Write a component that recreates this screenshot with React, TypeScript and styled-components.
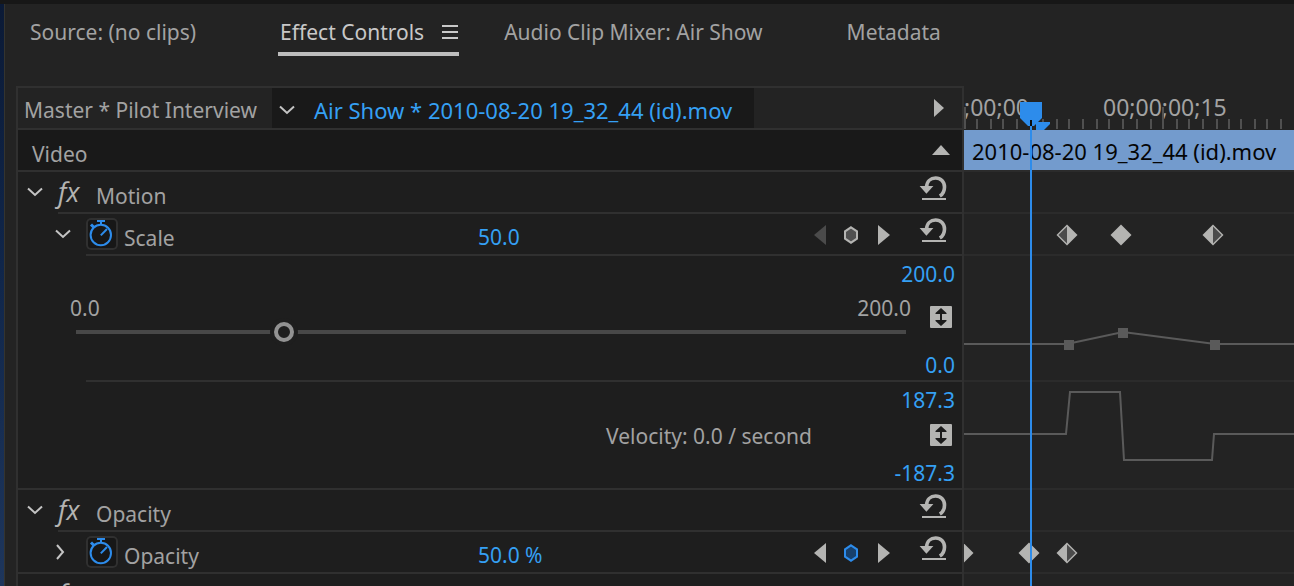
import React from "react";
import styled, { createGlobalStyle, css } from "styled-components";

const color = {
  panel: "#232323",
  rows: "#1e1e1e",
  deep: "#191919",
  line: "#303030",
  trackLine: "#2b2b2b",
  text: "#a2a2a2",
  bright: "#c8c8c8",
  icon: "#b4b4b2",
  dim: "#4b4b4b",
  graph: "#5a5a5a",
  value: "#35a0f4",
  accent: "#2d8ceb",
  clip: "#739bcd",
};

const GlobalStyle = createGlobalStyle`
  *, *::before, *::after { box-sizing: border-box; }
  body {
    margin: 0;
    overflow: hidden;
    background: ${color.panel};
    color: ${color.text};
    font: 21px/28px "Noto Sans", "Open Sans", sans-serif;
  }
  button, input {
    margin: 0;
    padding: 0;
    border: 0;
    background: none;
    color: inherit;
    font: inherit;
  }
  svg { display: block; flex: none; }
`;

const Window = styled.div`
  display: flex;
  flex-direction: column;
  height: 100vh;
  overflow: hidden;
  border-top: 4px solid #171717;
`;

const Frame = styled.div`
  flex: 1;
  min-height: 0;
  display: flex;
`;

const DesktopEdge = styled.div`
  flex: none;
  width: 5px;
  border-right: 1px solid #34342f;
  background: linear-gradient(#0b1a36, #10264a 45%, #1e365c);
`;

const Panel = styled.main`
  flex: 1;
  min-width: 0;
  padding-left: 11px;
`;

const Tabs = styled.nav`
  display: flex;
  gap: 43px;
  height: 82px;
  padding-left: 12px;
`;

const Tab = styled.button<{ $active?: boolean }>`
  display: flex;
  align-items: center;
  justify-content: space-between;
  gap: 18px;
  height: 52px;
  padding: 8px 0 0 2px;
  white-space: nowrap;
  border-bottom: 4px solid ${(p) => (p.$active ? "#bdbdbd" : "transparent")};
  color: ${(p) => (p.$active ? color.bright : color.text)};
`;

const MenuSlot = styled.span`
  width: 21px;
`;

const Editor = styled.div`
  display: grid;
  grid-template-columns: minmax(0, 1fr) 330px;
`;

const Properties = styled.section`
  border: 2px solid ${color.line};
  border-bottom: 0;
  background: ${color.rows};
`;

const Timeline = styled.section`
  position: relative;
  padding-top: 2px;
  overflow: hidden;
  background: ${color.panel};
`;

const Divider = styled.div<{ $indent?: number; $track?: boolean }>`
  height: 2px;
  margin-left: ${(p) => p.$indent ?? 0}px;
  background: ${(p) => (p.$track ? color.trackLine : color.line)};
`;

const rowBase = css`
  display: flex;
  align-items: center;
  height: 40px;
`;

const SourceRow = styled.header`
  ${rowBase}
  padding-right: 18px;
  background: ${color.panel};
  white-space: nowrap;
`;

const MasterClip = styled.button`
  width: 254px;
  height: 40px;
  padding: 4px 0 0 6px;
  text-align: left;
`;

const SequenceClip = styled.button`
  display: flex;
  align-items: center;
  gap: 19px;
  height: 40px;
  margin-right: auto;
  padding: 4px 22px 0 7px;
  background: ${color.deep};
  color: ${color.value};
  font-size: 22px;
`;

const SectionRow = styled.div`
  ${rowBase}
  justify-content: space-between;
  padding: 0 12px 0 14px;
  background: ${color.deep};
`;

const Row = styled.div`
  ${rowBase}
`;

const Twirl = styled.button<{ $width: number }>`
  display: flex;
  align-items: center;
  justify-content: flex-end;
  width: ${(p) => p.$width}px;
  height: 40px;
  padding-right: 15px;
`;

const Fx = styled.i`
  width: 38px;
  font: italic 400 27px/40px "Open Sans", "Noto Sans", sans-serif;
  color: ${color.icon};
`;

const Label = styled.span<{ $width?: number }>`
  width: ${(p) => (p.$width ? `${p.$width}px` : "auto")};
  padding-top: 7px;
`;

const ValueField = styled.input<{ $align?: "right" }>`
  width: 88px;
  text-align: ${(p) => p.$align ?? "left"};
  color: ${color.value};
`;

const ParamValue = styled(ValueField)`
  padding-top: 6px;
`;

const StopwatchButton = styled.button`
  width: 32px;
  height: 32px;
  margin-right: 6px;
  border-radius: 5px;
  background: #171717;
  box-shadow: inset 0 0 0 2px ${color.line};
`;

const KeyNav = styled.div`
  display: flex;
  align-items: center;
  gap: 18px;
  margin-left: auto;
  padding: 2px 28px 0 0;
`;

const IconButton = styled.button`
  display: flex;
`;

const ResetButton = styled.button`
  align-self: flex-start;
  margin: 2px 14px 0 auto;

  ${KeyNav} + & { margin-left: 0; }
`;

const NextEffect = styled(Row)`
  padding-left: 40px;
`;

const GraphRow = styled.div<{ $height: number }>`
  display: flex;
  flex-direction: column;
  align-items: flex-end;
  height: ${(p) => p.$height}px;
  padding-right: 7px;
`;

const GraphMax = styled(ValueField)`
  height: 36px;
`;

const GraphMin = styled(ValueField)`
  height: 30px;
`;

const GraphMiddle = styled.div`
  flex: 1;
  display: flex;
  width: 100%;
  padding: 2px 3px 0 48px;
`;

const SliderArea = styled.div`
  flex: 1;
`;

const SliderLabels = styled.div`
  display: flex;
  justify-content: space-between;
  padding: 0 5px 0 4px;
`;

const Slider = styled.input`
  display: block;
  width: 100%;
  height: 20px;
  appearance: none;

  &::-webkit-slider-runnable-track {
    height: 20px;
    background: linear-gradient(#484848, #484848) center / calc(100% - 20px) 4px no-repeat;
  }

  &::-webkit-slider-thumb {
    appearance: none;
    width: 20px;
    height: 20px;
    border: 4px solid #929292;
    border-radius: 50%;
    background: ${color.rows};
    box-shadow: 0 0 0 4px ${color.rows};
  }
`;

const Velocity = styled.span`
  margin: 2px 118px 0 auto;
`;

const FitButton = styled.button`
  width: 22px;
  height: 22px;
  margin: 12px 0 0 14px;
  border-radius: 1px;
  background: ${color.icon};

  ${Velocity} + & { margin-top: 4px; margin-left: 0; }
`;

const Ruler = styled.div`
  display: flex;
  height: 42px;
  font-size: 23px;
  line-height: 38px;
`;

const TimeLabel = styled.span`
  flex: none;
  width: 139px;
`;

const Ticks = styled.svg`
  position: absolute;
  top: 0;
  left: 0;
`;

const Clip = styled.div`
  height: 40px;
  padding: 1px 8px;
  overflow: hidden;
  background: ${color.clip};
  color: #050505;
  font-size: 22px;
  line-height: 40px;
  white-space: nowrap;
`;

const Lane = styled.svg`
  width: 100%;
`;

const Playhead = styled.svg`
  position: absolute;
  top: 16px;
  left: 56px;
`;

const ChevronDown = () => (
  <svg width="16" height="10" viewBox="0 0 16 10" fill="none" stroke="#c4c4c4" strokeWidth="2">
    <path d="M1 1.5 8 8l7-6.5" />
  </svg>
);

const ChevronRight = () => (
  <svg width="16" height="16" viewBox="0 0 16 16" fill="none" stroke="#c4c4c4" strokeWidth="2">
    <path d="M2 1l6 7-6 7" />
  </svg>
);

const Menu = () => (
  <svg width="17" height="16" viewBox="0 0 17 16" fill={color.bright}>
    <path d="M0 1h16v2H0zM0 7h16v2H0zM0 13h16v2H0z" />
  </svg>
);

const Stopwatch = () => (
  <svg width="32" height="32" viewBox="0 0 32 32" fill="none" stroke={color.accent} strokeWidth="2">
    <circle cx="14.8" cy="17" r="10.2" />
    <path d="M11 3h8M15 3v4" />
    <path d="M14.8 17.4 21 11" />
    <path d="M5 6.5l3 3" strokeWidth="3" />
  </svg>
);

const Reset = () => (
  <svg width="30" height="28" viewBox="0 0 30 28">
    <path
      d="M8.6 13C8.8 7.5 12.6 4 17.6 4c5.2 0 8.9 3.8 8.9 9 0 4-1.6 7.2-4.7 9"
      fill="none"
      stroke={color.icon}
      strokeWidth="3.6"
    />
    <path d="M1.6 12h13.8l-7 7.8zM4 24h24v2H4z" fill={color.icon} />
  </svg>
);

const Arrow = ({ dir, off }: { dir: "left" | "right"; off?: boolean }) => (
  <svg width="12" height="20" viewBox="0 0 12 20" fill={off ? color.dim : color.icon}>
    <path d={dir === "left" ? "M12 0v20L0 10z" : "M0 0v20l12-10z"} />
  </svg>
);

const Hexagon = ({ on }: { on?: boolean }) => (
  <svg width="16" height="18" viewBox="1 0 16 18">
    <path
      d="M8 1.3l6 4v7.4l-6 4-6-4V5.3z"
      fill={on ? "#17406c" : "#505050"}
      stroke={on ? color.accent : color.icon}
      strokeWidth="2"
    />
  </svg>
);

const Fit = () => (
  <svg width="22" height="22" viewBox="0 0 22 22" fill="#1b1b1b">
    <path d="M11 2l5.5 5v1H12v6h4.5v1L11 20l-5.5-5v-1H10V8H5.5V7z" />
  </svg>
);

type Fill = "full" | "left" | "right";

const Keyframe = ({ x, fill = "full" }: { x: number; fill?: Fill }) => (
  <g transform={`translate(${x} 21)`}>
    <path d="M0-10.5 10.5 0 0 10.5-10.5 0z" fill={color.icon} />
    {fill === "left" && <path d="M0-8.6 8.6 0 0 8.6z" fill={color.dim} />}
    {fill === "right" && <path d="M0-8.6-8.6 0 0 8.6z" fill={color.dim} />}
  </g>
);

const Track = ({ keys = [] }: { keys?: { x: number; fill?: Fill }[] }) => (
  <Lane height="40">
    {keys.map((k) => (
      <Keyframe key={k.x} {...k} />
    ))}
  </Lane>
);

const EffectRow = ({ name }: { name: string }) => (
  <Row>
    <Twirl $width={40} aria-label={`Collapse ${name}`}>
      <ChevronDown />
    </Twirl>
    <Fx>fx</Fx>
    <Label>{name}</Label>
    <ResetButton aria-label={`Reset ${name}`}>
      <Reset />
    </ResetButton>
  </Row>
);

type ParamProps = { name: string; value: string; open?: boolean; atKey?: boolean };

const ParamRow = ({ name, value, open, atKey }: ParamProps) => (
  <Row>
    <Twirl $width={68} aria-label={`Toggle ${name} graph`}>
      {open ? <ChevronDown /> : <ChevronRight />}
    </Twirl>
    <StopwatchButton aria-label={`Animate ${name}`}>
      <Stopwatch />
    </StopwatchButton>
    <Label $width={354}>{name}</Label>
    <ParamValue aria-label={`${name} value`} defaultValue={value} />
    <KeyNav>
      <IconButton aria-label="Previous keyframe">
        <Arrow dir="left" off={!atKey} />
      </IconButton>
      <IconButton aria-label="Add or remove keyframe">
        <Hexagon on={atKey} />
      </IconButton>
      <IconButton aria-label="Next keyframe">
        <Arrow dir="right" />
      </IconButton>
    </KeyNav>
    <ResetButton aria-label={`Reset ${name}`}>
      <Reset />
    </ResetButton>
  </Row>
);

const tickXs = [
  13, 27, 39, 53, 67, 79, 93, 105, 119, 133, 145, 159, 173, 187, 199, 213, 225, 239, 253, 265, 277,
  291, 303, 317,
];

export default function App() {
  return (
    <Window>
      <GlobalStyle />
      <Frame>
        <DesktopEdge />
        <Panel>
          <Tabs>
            <Tab>Source: (no clips)<MenuSlot /></Tab>
            <Tab $active>Effect Controls<Menu /></Tab>
            <Tab>Audio Clip Mixer: Air Show<MenuSlot /></Tab>
            <Tab>Metadata</Tab>
          </Tabs>
          <Editor>
            <Properties>
              <SourceRow>
                <MasterClip>Master * Pilot Interview</MasterClip>
                <SequenceClip>
                  <ChevronDown />
                  Air Show * 2010-08-20 19_32_44 (id).mov
                </SequenceClip>
                <IconButton aria-label="Show timeline">
                  <svg width="10" height="18" viewBox="0 0 10 18" fill={color.icon}>
                    <path d="M0 0v18l10-9z" />
                  </svg>
                </IconButton>
              </SourceRow>
              <Divider />
              <SectionRow>
                <Label>Video</Label>
                <IconButton aria-label="Collapse video effects">
                  <svg width="18" height="10" viewBox="0 0 18 10" fill={color.icon}>
                    <path d="M9 0l9 10H0z" />
                  </svg>
                </IconButton>
              </SectionRow>
              <Divider />
              <EffectRow name="Motion" />
              <Divider $indent={40} />
              <ParamRow name="Scale" value="50.0" open />
              <Divider $indent={68} />
              <GraphRow $height={124}>
                <GraphMax $align="right" aria-label="Scale graph maximum" defaultValue="200.0" />
                <GraphMiddle>
                  <SliderArea>
                    <SliderLabels>
                      <span>0.0</span>
                      <span>200.0</span>
                    </SliderLabels>
                    <Slider type="range" min="0" max="200" defaultValue="50" aria-label="Scale" />
                  </SliderArea>
                  <FitButton aria-label="Fit scale graph">
                    <Fit />
                  </FitButton>
                </GraphMiddle>
                <GraphMin $align="right" aria-label="Scale graph minimum" defaultValue="0.0" />
              </GraphRow>
              <Divider $indent={68} />
              <GraphRow $height={106}>
                <GraphMax $align="right" aria-label="Velocity maximum" defaultValue="187.3" />
                <GraphMiddle>
                  <Velocity>Velocity: 0.0 / second</Velocity>
                  <FitButton aria-label="Fit velocity graph">
                    <Fit />
                  </FitButton>
                </GraphMiddle>
                <GraphMin $align="right" aria-label="Velocity minimum" defaultValue="-187.3" />
              </GraphRow>
              <Divider />
              <EffectRow name="Opacity" />
              <Divider $indent={40} />
              <ParamRow name="Opacity" value="50.0 %" atKey />
              <Divider />
              <NextEffect>
                <Fx>fx</Fx>
              </NextEffect>
            </Properties>
            <Timeline>
              <Ruler>
                <TimeLabel>;00;00</TimeLabel>
                <TimeLabel>00;00;00;15</TimeLabel>
              </Ruler>
              <Ticks width="330" height="44" fill="#505050">
                <rect x="0" y="21" width="2" height="22" />
                {tickXs.map((x) => (
                  <rect key={x} x={x - 1} y={x === 199 ? 21 : 33} width="2" height={x === 199 ? 22 : 10} />
                ))}
              </Ticks>
              <Clip>2010-08-20 19_32_44 (id).mov</Clip>
              <Divider $track />
              <Track />
              <Divider $track />
              <Track keys={[{ x: 103, fill: "right" }, { x: 157 }, { x: 249, fill: "left" }]} />
              <Divider $track />
              <Lane height="124">
                <path
                  d="M0 88H103L159 76 251 88H2000"
                  fill="none"
                  stroke={color.graph}
                  strokeWidth="2"
                />
                <path d="M100 84h10v10h-10zM154 72h10v10h-10zM246 84h10v10h-10z" fill={color.graph} />
              </Lane>
              <Divider $track />
              <Lane height="106">
                <path
                  d="M0 52H102L106 10H156L160 78H248L250 52H2000"
                  fill="none"
                  stroke={color.graph}
                  strokeWidth="2"
                />
              </Lane>
              <Divider $track />
              <Track />
              <Divider $track />
              <Track keys={[{ x: -1 }, { x: 65 }, { x: 103, fill: "left" }]} />
              <Divider $track />
              <Track />
              <Playhead width="32" height="600" fill={color.accent}>
                <path d="M0 0h22v16l-8 8H8l-8-8z" />
                <path d="M16 20h14v2l-6 6h-8z" />
                <path d="M10 24h2v576h-2z" />
                <path d="M10 18h2v6h-2z" fill="#0c0c0c" />
              </Playhead>
            </Timeline>
          </Editor>
        </Panel>
      </Frame>
    </Window>
  );
}
